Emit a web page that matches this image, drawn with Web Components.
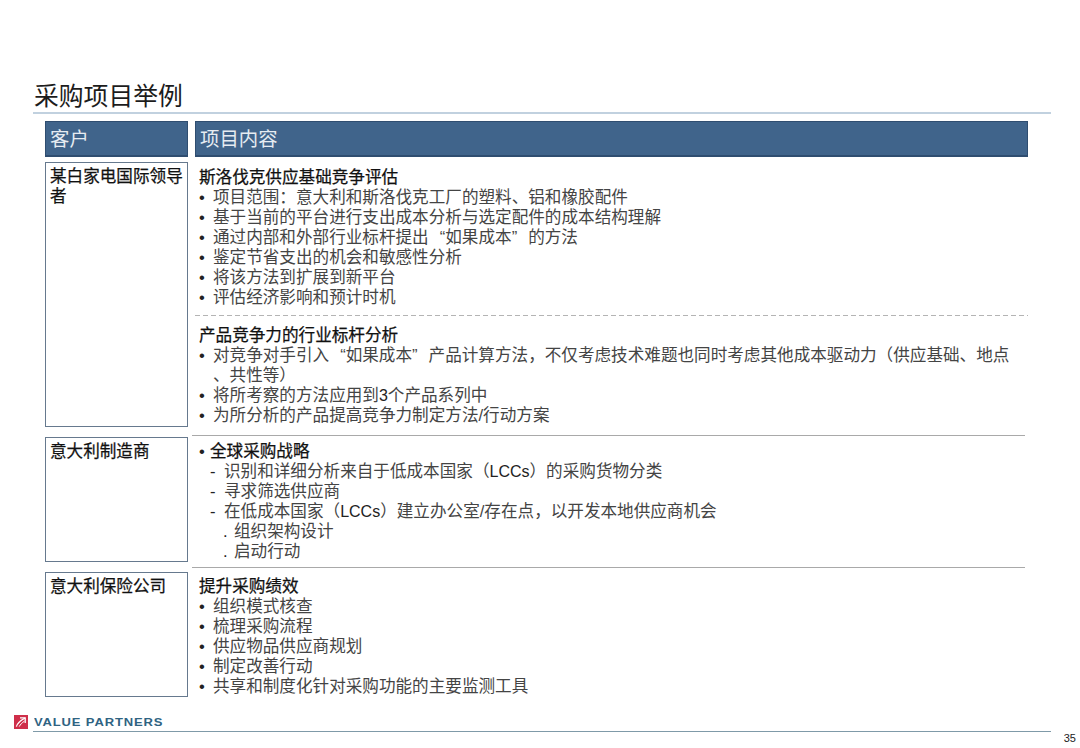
<!DOCTYPE html>
<html lang="zh">
<head>
<meta charset="utf-8">
<title>采购项目举例</title>
<style>
  html, body { margin: 0; padding: 0; background: #fff; }
  body {
    width: 1080px;
    height: 748px;
    overflow: hidden;
    font-family: "Liberation Sans", "Noto Sans CJK SC", sans-serif;
    color: #222;
  }
  .lat { color: #222; font-size: 16px; line-height: 1px; }
  /* the reference has full-width quotes, Liberation's are narrow */
  .qo { padding-left: 11px; }
  .qc { padding-right: 11px; }
</style>
</head>
<body>
<vp-slide heading="采购项目举例" page="35">
  <vp-row client="客户" head>项目内容</vp-row>

  <vp-row client="某白家电国际领导者" style="--row-h: 265px; --pad: 6px">
    <vp-block title="斯洛伐克供应基础竞争评估">
      <vp-item>项目范围：意大利和斯洛伐克工厂的塑料、铝和橡胶配件</vp-item>
      <vp-item>基于当前的平台进行支出成本分析与选定配件的成本结构理解</vp-item>
      <vp-item>通过内部和外部行业标杆提出<span class="qo">“</span>如果成本<span class="qc">”</span>的方法</vp-item>
      <vp-item>鉴定节省支出的机会和敏感性分析</vp-item>
      <vp-item>将该方法到扩展到新平台</vp-item>
      <vp-item>评估经济影响和预计时机</vp-item>
    </vp-block>
    <vp-rule dashed></vp-rule>
    <vp-block title="产品竞争力的行业标杆分析">
      <vp-item>对竞争对手引入<span class="qo">“</span>如果成本<span class="qc">”</span>产品计算方法，不仅考虑技术难题也同时考虑其他成本驱动力（供应基础、地点<br>、共性等）</vp-item>
      <vp-item>将所考察的方法应用到<span class="lat">3</span>个产品系列中</vp-item>
      <vp-item>为所分析的产品提高竞争力制定方法/行动方案</vp-item>
    </vp-block>
  </vp-row>
  <vp-rule style="--top: 8px; --bottom: 1px"></vp-rule>

  <vp-row client="意大利制造商" style="--row-h: 123px">
    <vp-item lead><strong>全球采购战略</strong></vp-item>
    <vp-item mark="-" level="1">识别和详细分析来自于低成本国家（<span class="lat">LCCs</span>）的采购货物分类</vp-item>
    <vp-item mark="-" level="1">寻求筛选供应商</vp-item>
    <vp-item mark="-" level="1">在低成本国家（<span class="lat">LCCs</span>）建立办公室/存在点，以开发本地供应商机会</vp-item>
    <vp-item mark="." level="2">组织架构设计</vp-item>
    <vp-item mark="." level="2">启动行动</vp-item>
  </vp-row>
  <vp-rule style="--top: 7px; --bottom: 4px"></vp-rule>

  <vp-row client="意大利保险公司" style="--row-h: 124px">
    <vp-block title="提升采购绩效">
      <vp-item>组织模式核查</vp-item>
      <vp-item>梳理采购流程</vp-item>
      <vp-item>供应物品供应商规划</vp-item>
      <vp-item>制定改善行动</vp-item>
      <vp-item>共享和制度化针对采购功能的主要监测工具</vp-item>
    </vp-block>
  </vp-row>
</vp-slide>

<script>
class VpSlide extends HTMLElement {
  constructor() {
    super()
    this.attachShadow({ mode: "open" })
    this.shadowRoot.innerHTML = `
    <style>
      :host { display: block; width: 1080px; height: 748px; }
      h1 {
        margin: 0;
        padding: 78px 0 0 34px;
        height: 34px;
        font: 400 24.8px/32px "Noto Sans CJK SC", sans-serif;
        color: #1c1c1c;
      }
      .title-rule { height: 2px; margin: 0 29px 0 33px; background: #c1d1df; }
      .body { padding: 7px 0 0 45px; }
      .logo {
        display: flex;
        align-items: center;
        gap: 6px;
        height: 15px;
        margin-top: 18px;
        padding-left: 14px;
      }
      .logo svg { display: block; flex: none; }
      .logo span {
        position: relative;
        top: 1px;
        font: 700 10px/15px "Liberation Sans", sans-serif;
        letter-spacing: 0.66px;
        color: #2f6382;
        transform: scaleX(1.3);
        transform-origin: left center;
      }
      .foot-rule { height: 1px; margin: 2px 29px 0 33px; background: #7f9aa8; }
      .page {
        padding: 0 4px 0 0;
        text-align: right;
        font: 400 11px/12px "Liberation Sans", sans-serif;
        color: #222;
      }
    </style>
    <h1></h1>
    <div class="title-rule"></div>
    <div class="body"><slot></slot></div>
    <div class="logo">
      <svg width="14" height="14" viewBox="0 0 14 14">
        <rect width="14" height="14" fill="#cf2f4a"/>
        <path d="M6 2.8 H11.2 V8" fill="none" stroke="#fff" stroke-width="1.3"/>
        <path d="M2.4 11.6 C3.6 7.6 6.6 5.4 11 3" fill="none" stroke="#fff" stroke-width="1.3"/>
        <path d="M5.2 11.6 C6.4 9.4 8 7.8 10.4 6.2" fill="none" stroke="#fff" stroke-width="1"/>
      </svg>
      <span>VALUE PARTNERS</span>
    </div>
    <div class="foot-rule"></div>
    <div class="page"></div>
    `
    this.shadowRoot.querySelector("h1").textContent = this.getAttribute("heading")
    this.shadowRoot.querySelector(".page").textContent = this.getAttribute("page")
  }
}

class VpRow extends HTMLElement {
  constructor() {
    super()
    this.attachShadow({ mode: "open" })
    this.shadowRoot.innerHTML = `
    <style>
      :host {
        display: grid;
        grid-template-columns: 143px 833px;
        column-gap: 7px;
        height: var(--row-h, auto);
        font: 400 16.6px/20px "Liberation Sans", "Noto Sans CJK SC", sans-serif;
        color: #444;
      }
      .client {
        box-sizing: border-box;
        border: 1px solid #66798e;
        padding: 4px 0 0 4px;
        color: #111;
        -webkit-text-stroke: 0.25px #111;
      }
      .content { padding: var(--pad, 5px) 0 0 4px; min-width: 0; }
      :host([head]) { height: 36px; margin-bottom: 5px; font-size: 19.4px; line-height: 34px; color: #e6ecf2; }
      :host([head]) .client,
      :host([head]) .content {
        box-sizing: border-box;
        height: 36px;
        padding: 0 0 0 4px;
        background: #40648b;
        border: 1px solid #2f4d70;
        border-bottom: 2px solid #2f4d70;
        color: #e6ecf2;
        -webkit-text-stroke: 0;
      }
    </style>
    <div class="client"></div>
    <div class="content"><slot></slot></div>
    `
    this.shadowRoot.querySelector(".client").textContent = this.getAttribute("client")
  }
}

class VpBlock extends HTMLElement {
  constructor() {
    super()
    this.attachShadow({ mode: "open" })
    this.shadowRoot.innerHTML = `
    <style>
      :host { display: block; }
      .title { color: #111; -webkit-text-stroke: 0.25px #111; }
    </style>
    <div class="title"></div>
    <slot></slot>
    `
    this.shadowRoot.querySelector(".title").textContent = this.getAttribute("title")
  }
}

class VpItem extends HTMLElement {
  constructor() {
    super()
    this.attachShadow({ mode: "open" })
    const level = Number(this.getAttribute("level") || 0)
    const lefts = [0, 11, 24]
    const widths = [14, 14, 11]
    const lead = this.hasAttribute("lead")
    this.shadowRoot.innerHTML = `
    <style>
      :host { display: flex; padding-left: ${lefts[level]}px; }
      .mark { flex: none; width: ${lead ? 11 : widths[level]}px; color: #222; font-family: "Liberation Sans", sans-serif; }
      .text { flex: 1; min-width: 0; padding-right: 14px; }
      ::slotted(strong) { font-weight: 400; color: #111; -webkit-text-stroke: 0.25px #111; }
    </style>
    <span class="mark"></span>
    <span class="text"><slot></slot></span>
    `
    this.shadowRoot.querySelector(".mark").textContent = this.getAttribute("mark") || "•"
  }
}

class VpRule extends HTMLElement {
  constructor() {
    super()
    this.attachShadow({ mode: "open" })
    this.shadowRoot.innerHTML = `
    <style>
      :host {
        display: block;
        padding: var(--top, 0) 0 var(--bottom, 0);
      }
      div { height: 1px; margin-left: 147px; width: 833px; background: #a9a9a9; }
      :host([dashed]) { padding: 7px 0 10px; }
      :host([dashed]) div {
        margin-left: -4px;
        background: repeating-linear-gradient(90deg, #b4b4b4 0 5px, transparent 5px 8px);
      }
    </style>
    <div></div>
    `
  }
}

customElements.define("vp-slide", VpSlide)
customElements.define("vp-row", VpRow)
customElements.define("vp-block", VpBlock)
customElements.define("vp-item", VpItem)
customElements.define("vp-rule", VpRule)
</script>
</body>
</html>
